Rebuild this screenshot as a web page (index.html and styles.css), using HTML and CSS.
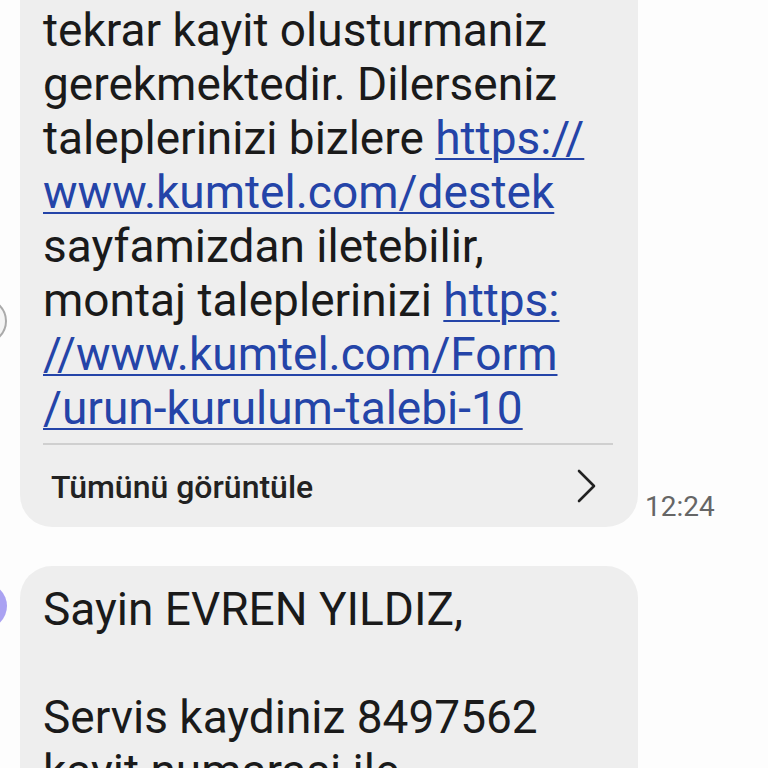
FILE: index.html
```html
<!DOCTYPE html>
<html>
<head>
<meta charset="utf-8">
<link rel="stylesheet" href="styles.css">
</head>
<body>
<div class="thread">
  <div class="msg msg-first">
    <div class="avatar avatar-gray"></div>
    <div class="bubble">
      <div class="body">tekrar kayit olusturmaniz<br>gerekmektedir. Dilerseniz<br>taleplerinizi bizlere <a class="link" href="#">https://<br>www.kumtel.com/destek</a><br>sayfamizdan iletebilir,<br>montaj taleplerinizi <a class="link" href="#">https:<br>//www.kumtel.com/Form<br>/urun-kurulum-talebi-10</a></div>
      <div class="divider"></div>
      <div class="footer">
        <span class="view-all">Tümünü görüntüle</span>
        <svg class="chevron" width="22" height="34" viewBox="0 0 22 34"><path d="M3 2 L18 17 L3 32" fill="none" stroke="#222" stroke-width="2.6" stroke-linecap="round" stroke-linejoin="round"/></svg>
      </div>
    </div>
    <div class="time">12:24</div>
  </div>
  <div class="msg msg-second">
    <div class="avatar avatar-purple"></div>
    <div class="bubble">
      <div class="body">Sayin EVREN YILDIZ,<br><br>Servis kaydiniz 8497562<br>kayit numarasi ile</div>
    </div>
  </div>
</div>
</body>
</html>
```

FILE: styles.css
```css
html, body {
  margin: 0;
  padding: 0;
  background: #fdfdfd;
  height: 768px;
  overflow: hidden;
}
.thread {
  font-family: Roboto, "Noto Sans", sans-serif;
  color: #1a1a1a;
  display: flex;
  flex-direction: column;
  gap: 39px;
  margin-top: -40px;
}
.msg {
  display: flex;
  align-items: flex-end;
}
.avatar {
  width: 46px;
  height: 46px;
  border-radius: 50%;
  flex: none;
  margin-left: -39px;
  margin-right: 13px;
  align-self: flex-start;
}
.avatar-gray {
  background: #f4f4f4;
  border: 2px solid #aaa;
  box-sizing: border-box;
  margin-top: 338px;
}
.avatar-purple {
  background: #aaa2f2;
  margin-top: 17px;
}
.bubble {
  width: 618px;
  background: #eeeeee;
  border-radius: 32px;
  flex: none;
}
.body {
  font-size: 46px;
  line-height: 54px;
  padding: 16px 10px 0 23px;
  white-space: nowrap;
}
.msg-first .body {
  padding-top: 43px;
}
.link {
  color: #2444a8;
  text-decoration: underline;
  text-decoration-thickness: 2px;
  text-underline-offset: 4px;
}
.divider {
  height: 2px;
  background: #cfcfcf;
  margin: 8px 25px 0 23px;
}
.footer {
  display: flex;
  align-items: center;
  justify-content: space-between;
  height: 82px;
  box-sizing: border-box;
  padding: 2px 40px 0 31px;
}
.view-all {
  font-size: 32px;
  font-weight: 500;
  color: #222;
}
.chevron {
  display: block;
  margin-top: -2px;
}
.time {
  font-size: 28px;
  color: #666;
  margin-left: 7px;
  padding-bottom: 4px;
}
```
